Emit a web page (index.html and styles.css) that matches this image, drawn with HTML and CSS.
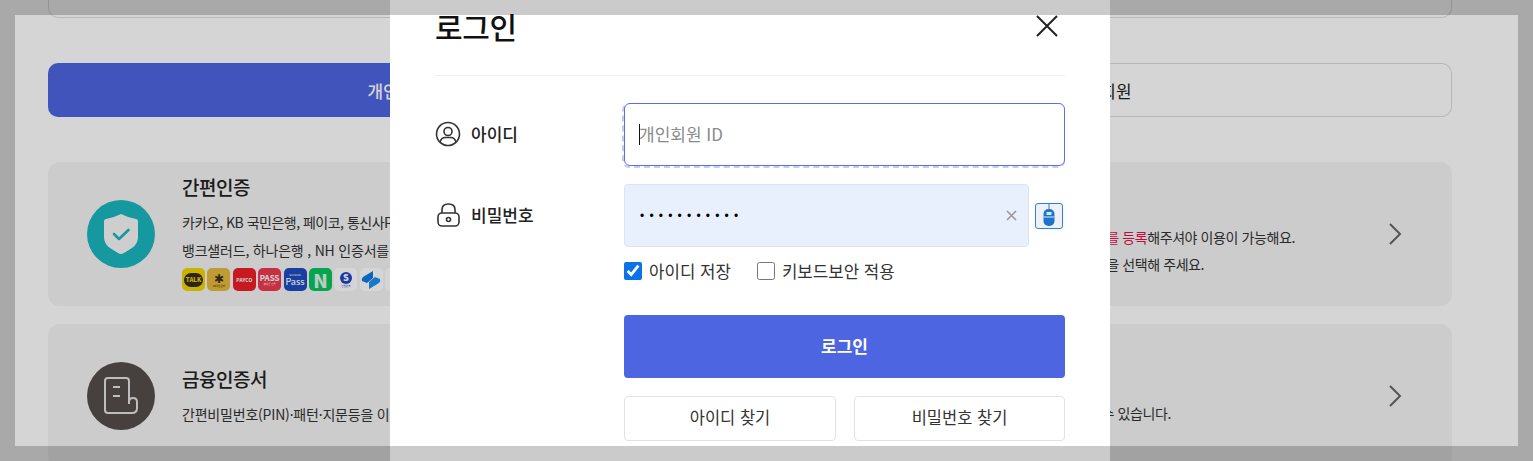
FILE: index.html
```html
<!DOCTYPE html>
<html lang="ko">
<head>
  <meta charset="UTF-8" />
  <title>로그인</title>
  <link rel="stylesheet" href="styles.css">
</head>
<body>
  <div class="page">
    <div class="top-box"></div>

    <div class="tabs">
      <a class="tab tab-on">개인회원</a>
      <a class="tab">기업회원</a>
    </div>

    <div class="card">
      <div class="card-icon icon-teal">
        <svg width="36" height="42" viewBox="0 0 36 42">
          <path d="M18 1 Q26 5 33 6 Q35 6.500 35 8 V24 Q35 31 29 35 L21 40 Q18 42 15 40 L7 35 Q1 31 1 24 V8 Q1 6.500 3 6 Q10 5 18 1 Z" fill="#f7f7f7"/>
          <path d="M11 21 L16 26 L25.500 17" fill="none" stroke="#1ab6bf" stroke-width="2.600" stroke-linecap="round" stroke-linejoin="round"/>
        </svg>
      </div>
      <div class="card-text text-logos">
        <h3>간편인증</h3>
        <p>카카오, KB 국민은행, 페이코, 통신사PASS</p>
        <p class="wide">뱅크샐러드, 하나은행 , NH 인증서를</p>
        <div class="logos">
          <span class="logo logo-talk"><b>TALK</b></span>
          <span class="logo logo-kb"><i>✱</i><small>KB국민은행</small></span>
          <span class="logo logo-payco">PAYCO</span>
          <span class="logo logo-pass">PASS<small>휴대폰 인증</small></span>
          <span class="logo logo-samsung"><small>SAMSUNG</small>Pass</span>
          <span class="logo logo-naver">N</span>
          <span class="logo logo-shinhan"><b>S</b><small>신한은행</small></span>
          <span class="logo logo-toss">
            <svg width="20" height="18" viewBox="0 0 20 18"><path d="M12 0 L2 6 Q0 8 1 10 L6 12 L12 7 Z" fill="#0f7be0"/><path d="M8 18 L18 12 Q20 10 19 8 L14 6 L8 11 Z" fill="#1c8ff2"/></svg>
          </span>
          <span class="logo logo-toss"></span>
        </div>
      </div>
      <div class="card-note note-two">
        <p><em>를 등록</em>해주셔야 이용이 가능해요.</p>
        <p>을 선택해 주세요.</p>
      </div>
      <svg class="chevron" width="14" height="24" viewBox="0 0 14 24"><path d="M2 2 L12 12 L2 22" fill="none" stroke="#666" stroke-width="2"/></svg>
    </div>

    <div class="card">
      <div class="card-icon icon-dark">
        <svg width="36" height="38" viewBox="0 0 36 38">
          <path d="M26 27 V4 Q26 1 23 1 H5 Q2 1 2 4 V33 Q2 36 5 36 H29 Q34 36 34 31 V25 Q34 21 30 21 Q26 21 26 25" fill="none" stroke="#e4e4e4" stroke-width="2"/>
          <path d="M10 10 H17 M10 19 H17" stroke="#e4e4e4" stroke-width="2"/>
        </svg>
      </div>
      <div class="card-text text-plain">
        <h3>금융인증서</h3>
        <p class="wide">간편비밀번호(PIN)·패턴·지문등을 이용</p>
      </div>
      <div class="card-note note-one">
        <p>수 있습니다.</p>
      </div>
      <svg class="chevron" width="14" height="24" viewBox="0 0 14 24"><path d="M2 2 L12 12 L2 22" fill="none" stroke="#666" stroke-width="2"/></svg>
    </div>
  </div>

  <div class="dim"></div>

  <div class="modal">
    <div class="modal-head">
      <h2>로그인</h2>
      <svg width="24" height="24" viewBox="0 0 24 24"><path d="M2 2 L22 22 M22 2 L2 22" stroke="#222" stroke-width="2"/></svg>
    </div>

    <div class="form-row row-id">
      <label>
        <svg width="26" height="26" viewBox="0 0 26 26" fill="none" stroke="#333" stroke-width="1.600">
          <circle cx="13" cy="13" r="11.500"/>
          <circle cx="13" cy="10.500" r="4"/>
          <path d="M5 21 Q6.500 16.500 10 16.500 H16 Q19.500 16.500 21 21"/>
        </svg>
        아이디
      </label>
      <div class="field-focus">
        <input type="text" placeholder="개인회원 ID">
        <span class="caret"></span>
      </div>
    </div>

    <div class="form-row row-pw">
      <label>
        <svg width="26" height="26" viewBox="0 0 26 26" fill="none" stroke="#333" stroke-width="1.600">
          <rect x="3" y="11" width="21" height="13" rx="4"/>
          <path d="M7 11 V7.500 Q7 2 13.500 2 Q20 2 20 7.500 V11"/>
          <circle cx="13.500" cy="17.500" r="2"/>
        </svg>
        비밀번호
      </label>
      <div class="pw-wrap">
        <div class="pw-field">
          <input type="password" value="abcdefghijk">
          <svg class="pw-clear" width="11" height="11" viewBox="0 0 11 11"><path d="M1 1 L10 10 M10 1 L1 10" stroke="#999" stroke-width="1.600"/></svg>
        </div>
        <button class="keypad">
          <svg width="14" height="24" viewBox="0 0 14 24">
            <path d="M7 0 V6" stroke="#2a82d8" stroke-width="1"/>
            <rect x="1.500" y="5" width="11" height="17" rx="5" fill="#1d74d0"/>
            <rect x="4.500" y="8" width="5" height="3" fill="#d8e8f8"/>
            <path d="M1.500 13 H12.500" stroke="#d8e8f8" stroke-width="1"/>
          </svg>
        </button>
      </div>
    </div>

    <div class="checks">
      <label><input type="checkbox" checked> 아이디 저장</label>
      <label><input type="checkbox"> 키보드보안 적용</label>
    </div>

    <button class="btn-login">로그인</button>

    <div class="find-row">
      <button>아이디 찾기</button>
      <button>비밀번호 찾기</button>
    </div>
  </div>

  <div class="frame"></div>
</body>
</html>
```

FILE: styles.css
```css
* {
  box-sizing: border-box;
}

html, body {
  margin: 0;
  height: 461px;
  overflow: hidden;
}

body {
  font-family: "Noto Sans CJK KR", "Noto Sans", sans-serif;
  background: #fff;
  color: #222;
  position: relative;
}

h2, h3, p {
  margin: 0;
}

.page {
  width: 1500px;
  height: 461px;
  padding: 0 48px;
  overflow: hidden;
}

.top-box {
  height: 18px;
  border: 1px solid #dedede;
  border-top: none;
  border-radius: 0 0 10px 10px;
  margin-bottom: 45px;
}

/* tabs */
.tabs {
  display: flex;
  margin-bottom: 45px;
}

.tab {
  flex: 1;
  height: 54px;
  display: flex;
  align-items: center;
  justify-content: center;
  font-size: 17px;
  border: 1px solid #dcdcdc;
  border-left: none;
  border-radius: 0 10px 10px 0;
}

.tab-on {
  background: #4e65e1;
  border: none;
  border-radius: 10px 0 0 10px;
  color: #fff;
  font-weight: 500;
}

/* cards */
.card {
  height: 144px;
  margin-bottom: 18px;
  background: #f5f5f5;
  border-radius: 12px;
  padding-left: 39px;
  display: flex;
  align-items: center;
  letter-spacing: -0.5px;
}

.card-icon {
  width: 68px;
  height: 68px;
  border-radius: 50%;
  flex: none;
  display: flex;
  align-items: center;
  justify-content: center;
}

.icon-teal {
  background: #1ab6bf;
}

.icon-dark {
  background: #544e4c;
}

.card-text {
  margin-left: 27px;
  width: 208px;
  flex: none;
  white-space: nowrap;
}

.text-logos {
  padding-bottom: 3px;
}

.text-plain {
  padding-top: 2px;
}

.card h3 {
  font-size: 19px;
  font-weight: 500;
  line-height: 26px;
  margin-bottom: 8px;
}

.card p {
  font-size: 14px;
  line-height: 28px;
  color: #333;
}

.card p.wide {
  letter-spacing: -0.2px;
}

.card-note {
  margin-left: auto;
  white-space: nowrap;
  letter-spacing: -0.4px;
}

.note-two {
  padding-top: 33px;
}

.note-one {
  padding-top: 34px;
}

.card-note p {
  line-height: 27px;
}

.card-note em {
  font-style: normal;
  color: #e0134f;
}

.chevron {
  flex: none;
  margin-right: 50px;
}

.note-two + .chevron {
  margin-left: 93px;
}

.note-one + .chevron {
  margin-left: 217px;
}

.logos {
  display: flex;
  gap: 2.400px;
  margin-top: 4px;
}

.logo {
  width: 23px;
  height: 23px;
  flex: none;
  border-radius: 5px;
  display: flex;
  flex-direction: column;
  align-items: center;
  justify-content: center;
  color: #fff;
  letter-spacing: 0;
  font-size: 6px;
  font-weight: 700;
  line-height: 1;
}

.logo small {
  font-size: 2.500px;
  font-weight: 400;
  line-height: 4px;
  white-space: nowrap;
}

.logo-talk {
  background: #f0d800;
}

.logo-talk b {
  background: #3a2a20;
  color: #f0d800;
  font-size: 6px;
  border-radius: 8px;
  padding: 4px 2px;
}

.logo-kb {
  background: #e6b93c;
  color: #3a3020;
}

.logo-kb i {
  font-style: normal;
  font-weight: 400;
  font-size: 12px;
  line-height: 12px;
}

.logo-payco {
  background: #ef2027;
  font-size: 5px;
}

.logo-pass {
  background: #ef3a50;
  font-size: 8px;
}

.logo-samsung {
  background: #1f4cc0;
  font-size: 9px;
  font-weight: 500;
}

.logo-naver {
  background: #06c65f;
  color: #dff5e8;
  font-size: 19px;
  font-weight: 900;
}

.logo-shinhan {
  background: #fff;
  color: #1f45c8;
}

.logo-shinhan b {
  width: 12px;
  height: 12px;
  border-radius: 50%;
  background: #1f45c8;
  color: #fff;
  font-size: 9px;
  display: flex;
  align-items: center;
  justify-content: center;
}

.logo-toss {
  background: #fff;
}

/* overlays */
.dim {
  position: absolute;
  inset: 0;
  background: rgba(0, 0, 0, 0.165);
}

.frame {
  position: absolute;
  inset: 0;
  border: 15px solid rgba(0, 0, 0, 0.205);
}

.modal {
  position: absolute;
  left: 390px;
  top: 0;
  width: 720px;
  height: 461px;
  background: #fff;
  padding: 0 45px;
  overflow: hidden;
}

.modal-head {
  height: 76px;
  border-bottom: 1px solid #f0f0f0;
  display: flex;
  justify-content: space-between;
  align-items: flex-start;
  padding-top: 5px;
  margin-bottom: 27px;
}

.modal-head h2 {
  font-size: 30px;
  font-weight: 500;
  line-height: 42px;
  letter-spacing: -0.3px;
  color: #111;
}

.modal-head svg {
  margin: 9px 6px 0 0;
}

.form-row {
  display: flex;
  align-items: center;
}

.form-row > label {
  width: 189px;
  display: flex;
  align-items: center;
  gap: 10px;
  font-size: 17px;
  font-weight: 500;
  flex: none;
  margin-top: -2px;
}

.row-pw {
  margin-top: 18px;
}

.field-focus {
  position: relative;
  width: 441px;
  height: 63px;
}

/* dashed focus ring, only shows at the left and bottom */
.field-focus::before {
  content: "";
  position: absolute;
  inset: 0 0 -2px -2px;
  border: 2px dashed #c4cbf5;
  border-radius: 7px;
}

.field-focus input {
  position: relative;
  width: 100%;
  height: 100%;
  border: 1px solid #5a6fe5;
  border-radius: 6px;
  background: #fff;
  padding: 0 14px 2px;
  font: inherit;
  font-size: 17px;
  outline: none;
}

.field-focus input::placeholder {
  color: #8a8a8a;
}

.caret {
  position: absolute;
  left: 15px;
  top: 21px;
  width: 1px;
  height: 21px;
  background: #111;
}

.pw-wrap {
  display: flex;
  align-items: center;
  width: 441px;
}

.pw-field {
  position: relative;
  width: 405px;
  height: 63px;
}

.pw-field input {
  width: 100%;
  height: 100%;
  border: 1px solid #e0e3ea;
  border-radius: 4px;
  background: #e8f0fe;
  padding: 1px 15px 0;
  font-family: "Liberation Sans", sans-serif;
  font-size: 12px;
  letter-spacing: 5.200px;
  outline: none;
}

.pw-clear {
  position: absolute;
  right: 12px;
  top: 26px;
}

.keypad {
  width: 28px;
  height: 26px;
  margin-left: 6px;
  padding: 0;
  border: 1px solid #2a82d8;
  border-radius: 3px;
  background: #eef1f6;
  display: flex;
  justify-content: center;
  overflow: hidden;
}

.checks {
  display: flex;
  gap: 26px;
  margin: 12px 0 0 189px;
  font-size: 16.800px;
  color: #333;
}

.checks label {
  display: flex;
  align-items: center;
  gap: 7px;
  line-height: 24px;
}

.checks input {
  width: 18px;
  height: 18px;
  margin: 0;
  accent-color: #0b72e7;
}

.btn-login {
  display: block;
  width: 441px;
  height: 63px;
  margin: 32px 0 0 189px;
  padding: 0 0 2px;
  border: none;
  border-radius: 4px;
  background: #4e65e1;
  color: #fff;
  font: inherit;
  font-size: 17px;
  font-weight: 700;
}

.find-row {
  display: flex;
  justify-content: space-between;
  margin: 18px 0 0 189px;
  width: 441px;
}

.find-row button {
  width: 212px;
  height: 45px;
  padding: 0 0 3px;
  border: 1px solid #e2e2e2;
  border-radius: 4px;
  background: #fff;
  color: #333;
  font: inherit;
  font-size: 16.500px;
}

.find-row button + button {
  width: 211px;
}
```
